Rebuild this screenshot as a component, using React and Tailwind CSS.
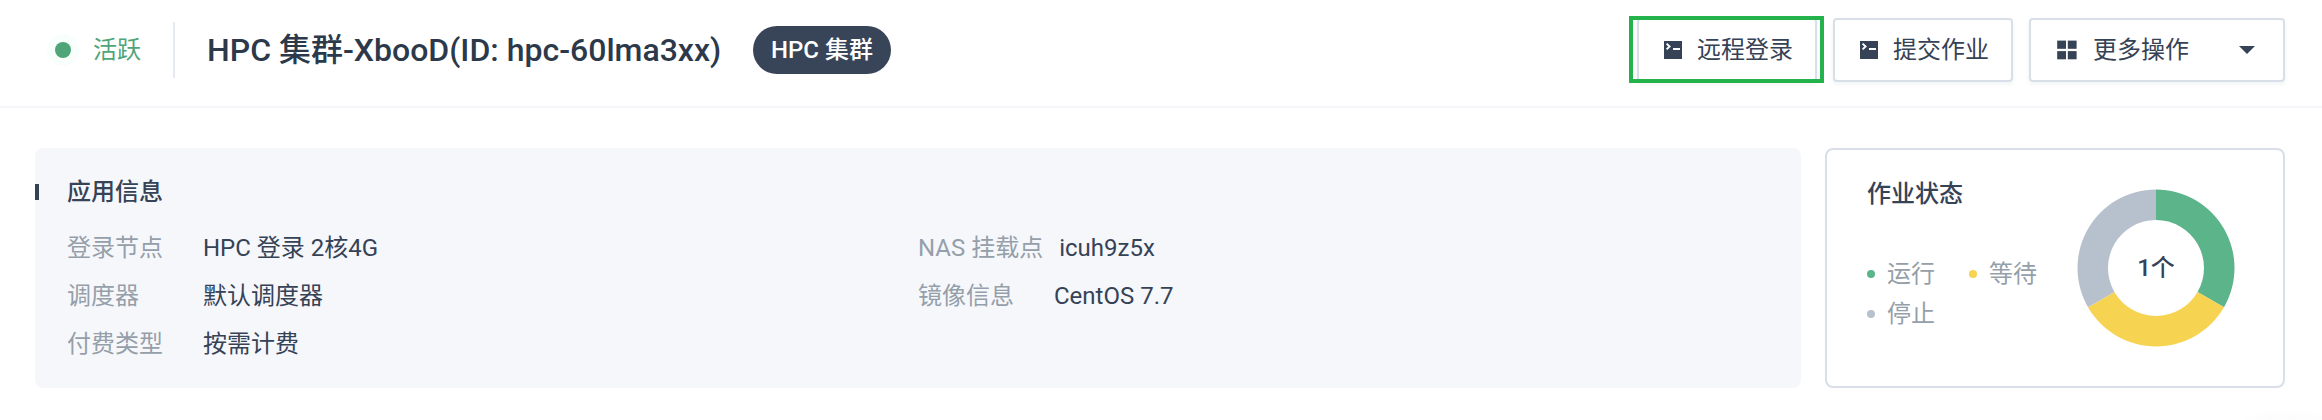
const TerminalIcon = () => (
  <svg className="h-[18px] w-[18px] shrink-0" viewBox="0 0 18 18">
    <rect width="18" height="18" fill="#364255" />
    <path d="M2.6 2.6 L5.6 5.5 L2.6 8.4" fill="none" stroke="#fff" strokeWidth="1.9" />
    <rect x="9" y="7" width="7" height="2" fill="#fff" />
  </svg>
);

const GridIcon = () => (
  <svg className="h-5 w-5 shrink-0" viewBox="0 0 20 20" fill="#364255">
    <rect x="0.2" y="0.6" width="8.8" height="8.2" />
    <rect x="10.8" y="0.6" width="8.8" height="8.2" />
    <rect x="0.2" y="11.1" width="8.8" height="8.2" />
    <rect x="10.8" y="11.1" width="8.8" height="8.2" />
  </svg>
);

const buttonClass =
  "flex h-16 items-center rounded border-2 border-[#d8dfe9] bg-white text-2xl text-[#364255] shadow-[0_2px_4px_rgba(40,120,80,0.08)]";

const Field = ({ label, value }) => (
  <div className="flex h-12 items-center">
    <span className="min-w-[120px] shrink-0 text-[#959faa]">{label}</span>
    <span className="ml-4">{value}</span>
  </div>
);

const Legend = ({ dot, text }) => (
  <span className="flex h-10 w-[102px] items-center">
    <i className={"mr-3 h-2 w-2 shrink-0 rounded-full " + dot} />
    {text}
  </span>
);

const Donut = () => (
  <svg className="h-[158px] w-[158px]" viewBox="-79 -79 158 158">
    <path d="M0 -78.5 A78.5 78.5 0 0 1 67.98 39.25 L41.57 24 A48 48 0 0 0 0 -48 Z" fill="#5cb48b" />
    <path d="M67.98 39.25 A78.5 78.5 0 0 1 -67.98 39.25 L-41.57 24 A48 48 0 0 0 41.57 24 Z" fill="#f7d352" />
    <path d="M-67.98 39.25 A78.5 78.5 0 0 1 0 -78.5 L0 -48 A48 48 0 0 0 -41.57 24 Z" fill="#b7c1cd" />
  </svg>
);

export default function App() {
  return (
    <div className="relative h-[420px] w-[2322px] overflow-hidden bg-white font-['Roboto','Noto_Sans_CJK_SC',sans-serif] text-2xl text-[#364255]">
      <header className="flex h-[108px] items-center border-b-2 border-[#f4f6fa] pb-[6px] pl-[47px] pr-[37px]">
        <span className="flex h-8 w-8 items-center justify-center rounded-full bg-[#f7fefb]">
          <i className="h-4 w-4 rounded-full bg-[#4fa577]" />
        </span>
        <span className="ml-[14px] w-[80px] text-[#4fa577]">活跃</span>
        <span className="h-14 w-[2px] bg-[#e6ebf1]" />
        <h1 className="ml-8 w-[546px] whitespace-nowrap text-[32px] font-medium leading-10 text-[#2c394a]">
          HPC 集群-XbooD(ID: hpc-60lma3xx)
        </h1>
        <span className="flex h-12 w-[138px] items-center justify-center rounded-full bg-[#384457] font-medium text-white">
          HPC 集群
        </span>
        <div className="ml-auto flex gap-4">
          <div className="relative">
            <button className={buttonClass + " w-[180px] gap-[15px] pl-[25px]"}>
              <TerminalIcon />
              远程登录
            </button>
            <span className="absolute -left-2 -top-[2px] h-[67px] w-[195px] border-4 border-[#24b24c]" />
          </div>
          <button className={buttonClass + " w-[180px] gap-[15px] pl-[25px]"}>
            <TerminalIcon />
            提交作业
          </button>
          <button className={buttonClass + " w-[256px] pl-[26px]"}>
            <GridIcon />
            <span className="ml-4">更多操作</span>
            <svg className="ml-[50px] h-2 w-4" viewBox="0 0 16 8" fill="#364255">
              <path d="M0 0H16L8 8Z" />
            </svg>
          </button>
        </div>
      </header>
      <main className="flex gap-6 pl-[35px] pr-[37px] pt-10">
        <section className="h-60 w-[1766px] rounded-lg bg-[#f5f7fb] pt-6">
          <div className="flex h-10 items-center">
            <i className="h-4 w-1 bg-[#364255]" />
            <h2 className="ml-[28px] font-medium">应用信息</h2>
          </div>
          <div className="mt-3 flex pl-8">
            <div className="w-[851px]">
              <Field label="登录节点" value="HPC 登录 2核4G" />
              <Field label="调度器" value="默认调度器" />
              <Field label="付费类型" value="按需计费" />
            </div>
            <div>
              <Field label="NAS 挂载点" value="icuh9z5x" />
              <Field label="镜像信息" value="CentOS 7.7" />
            </div>
          </div>
        </section>
        <section className="flex h-60 w-[460px] rounded-lg border-2 border-[#d8dfe9]">
          <div className="w-[250px] pl-10 pt-6">
            <h2 className="h-10 font-medium leading-10">作业状态</h2>
            <div className="mt-10 flex flex-wrap text-[#959faa]">
              <Legend dot="bg-[#5cb48b]" text="运行" />
              <Legend dot="bg-[#f7d352]" text="等待" />
              <Legend dot="bg-[#b7c1cd]" text="停止" />
            </div>
          </div>
          <div className="mt-[39px] grid h-[158px] w-[158px] place-items-center [&>*]:[grid-area:1/1]">
            <Donut />
            <span className="font-medium">1个</span>
          </div>
        </section>
      </main>
      <div className="absolute -bottom-[94px] right-[-48px] h-[108px] w-[160px] rounded-full bg-[radial-gradient(closest-side,rgba(0,0,0,0.05),transparent)]" />
    </div>
  );
}
